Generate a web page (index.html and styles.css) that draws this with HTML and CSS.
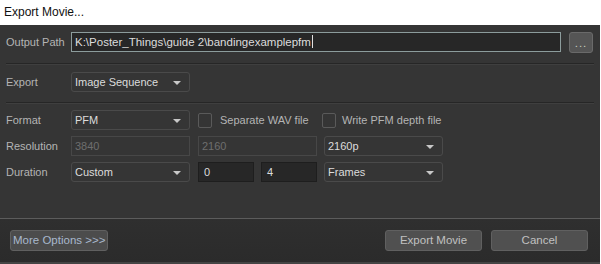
FILE: index.html
```html
<!DOCTYPE html>
<html>
    <head>
        <title>Export Movie</title><meta charset="UTF-8">
        <link rel="stylesheet" href="styles.css">
    </head>
    <body>
        <div class="title">Export Movie...</div>
        <div class="panel">
            <div class="row path">
                <div class="label">Output Path</div>
                <div class="field input focus wide">K:\Poster_Things\guide 2\bandingexamplepfm<span class="caret"></span></div>
                <div class="btn dots">...</div>
            </div>
            <div class="sep"></div>
            <div class="row export">
                <div class="label">Export</div>
                <div class="field combo">Image Sequence<span class="arrow"></span></div>
            </div>
            <div class="sep"></div>
            <div class="rows">
                <div class="row">
                    <div class="label">Format</div>
                    <div class="field combo">PFM<span class="arrow"></span></div>
                    <div class="check"><span class="box"></span>Separate WAV file</div>
                    <div class="check"><span class="box"></span>Write PFM depth file</div>
                </div>
                <div class="row">
                    <div class="label">Resolution</div>
                    <div class="field disabled">3840</div>
                    <div class="field disabled">2160</div>
                    <div class="field combo">2160p<span class="arrow"></span></div>
                </div>
                <div class="row">
                    <div class="label">Duration</div>
                    <div class="field combo">Custom<span class="arrow"></span></div>
                    <div class="field input small">0</div>
                    <div class="field input small">4</div>
                    <div class="field combo">Frames<span class="arrow"></span></div>
                </div>
            </div>
            <div class="footer">
                <div class="btn more">More Options &gt;&gt;&gt;</div>
                <div class="actions">
                    <div class="btn action">Export Movie</div>
                    <div class="btn action">Cancel</div>
                </div>
            </div>
        </div>
    </body>
</html>
```

FILE: styles.css
```css
*{margin: 0; padding: 0; box-sizing: border-box;}
body{width: 601px; height: 264px; overflow: hidden; background: #fff; font-family: "Liberation Sans", Arial, sans-serif; font-size: 11px; white-space: nowrap;}
.title{height: 25px; padding-left: 4px; line-height: 24px; color: #111; background: #fff; font-size: 12px;}
.panel{width: 600px; height: 239px; background: #353535; display: flex; flex-direction: column; color: #b4b4b4;}
.row{display: flex; align-items: center; height: 20px; padding-left: 6px;}
.label{width: 65px; flex: none;}
.path{margin-top: 7px;}
.sep{height: 2px; margin: 11px 6px 7px 6px; border-top: 1px solid #262626; border-bottom: 1px solid #3f3f3f;}
.export + .sep{margin-top: 10px; margin-bottom: 6px;}
.rows{display: flex; flex-direction: column; gap: 6px;}
.rows .row{gap: 7px;}
.rows .row .label{margin-right: -7px;}
.field{height: 20px; width: 119px; line-height: 18px; padding-left: 3px; border: 1px solid #4a4a4a; border-radius: 3px; position: relative; flex: none;}
.rows .row .field:nth-child(3){margin-left: 1px;}
.input{background: #272727; border-color: #1e1e1e; border-radius: 0; color: #dcdcdc;}
.focus{border-color: #8c9c9c; font-size: 11.5px;}
.wide{width: 490px;}
.small{width: 56px; padding-left: 5px;}
.combo{color: #dcdcdc;}
.disabled{color: #6e6e6e; border-color: #474747; border-radius: 0;}
.caret{display: inline-block; width: 1px; height: 13px; background: #e0e0e0; vertical-align: -2px; margin-left: 1px;}
.arrow{position: absolute; right: 8px; top: 8px; border-left: 4px solid transparent; border-right: 4px solid transparent; border-top: 4px solid #c8c8c8;}
.check{display: flex; align-items: center; width: 117px; flex: none; margin-left: 1px;}
.check .box{flex: none; width: 14px; height: 15px; border: 1px solid #5a5a5a; border-radius: 2px; margin-right: 8px;}
.check + .check{margin-left: 0;}
.check + .check .box{margin-right: 6px;}
.btn{height: 21px; line-height: 19px; border: 1px solid #606060; border-radius: 3px; background: #4c4c4c; text-align: center; color: #b8bcc4; font-size: 11.5px;}
.dots{width: 24px; margin-left: 8px; height: 21px; background: #555; border-color: #6a6a6a; line-height: 21px; letter-spacing: 1px; color: #c8d0c0;}
.footer{margin-top: auto; height: 46px; border-top: 1px solid #5c5c5c; background: linear-gradient(#2f2f2f, #2b2b2b); display: flex; align-items: flex-start; padding: 11px 0 0 10px; border-bottom: 2px solid #444;}
.more{width: 98px; color: #a8b8cc; text-align: left; padding-left: 2px;}
.actions{display: flex; gap: 9px; margin-left: auto; margin-right: 12px;}
.action{width: 97px; background: #505050; color: #c0c0c0;}
```
